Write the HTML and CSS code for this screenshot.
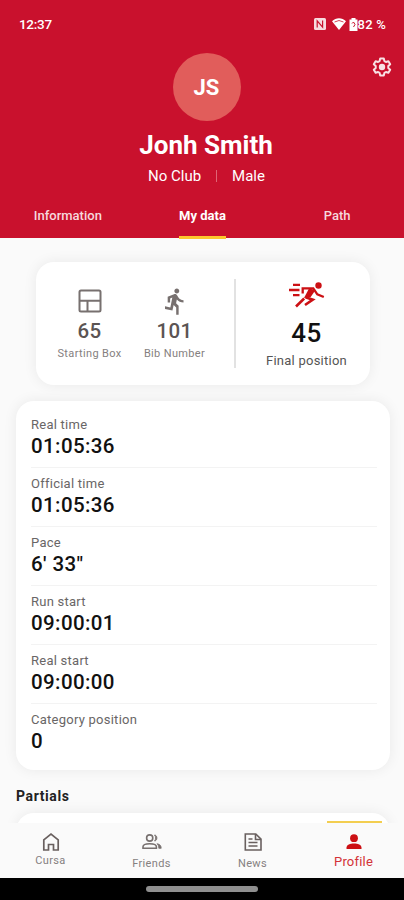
FILE: index.html
```html
<!DOCTYPE html>
<html lang="en">
<head>
    <meta charset="UTF-8">
    <meta name="viewport" content="width=device-width, initial-scale=1.0">
    <title>Profile</title>
    <link rel="stylesheet" href="styles.css">
</head>
<body>
    <header class="header">
        <div class="status-bar">
            <span class="clock">12:37</span>
            <div class="status-icons">
                <svg class="nfc" viewBox="0 0 12 12"><rect width="12" height="12" rx="1.500" fill="#fff" fill-opacity=".85"/><path d="M3.200 9.500V2.800L8.600 9.200V2.500" fill="none" stroke="#c9112d" stroke-width="1.200"/></svg>
                <svg class="wifi" viewBox="0 0 14 12"><path d="M7 12L0 3.300C4-.8 10-.8 14 3.300z" fill="#fff"/><path d="M2.500 4Q7 1 11.500 4" fill="none" stroke="#c9112d" stroke-width=".8"/></svg>
                <svg class="battery" viewBox="0 0 9 13"><path d="M2.500 0h4v1.500H8.500v11.500H.5V1.500h2z" fill="#fff"/><path d="M3 5.500l1.500-1.500L6 6.500 4.500 9" fill="none" stroke="#c9112d"/></svg>
                <span>82 %</span>
            </div>
        </div>
        <button class="settings-btn" aria-label="Settings">
            <svg viewBox="0 0 20 20" fill="none" stroke="#fff" stroke-width="2" stroke-linejoin="round"><path d="M8.200 1.500h3.600l.6 2.600 1.500.9 2.500-.8 1.800 3.100-1.900 1.800v1.800l1.900 1.800-1.800 3.100-2.500-.8-1.500.9-.6 2.600H8.200l-.6-2.600-1.500-.9-2.500.8-1.800-3.100 1.900-1.800V9.100L1.800 7.300l1.800-3.100 2.500.8 1.500-.9z"/><circle cx="10" cy="10" r="3.200" fill="#fff" stroke="none"/></svg>
        </button>
        <div class="avatar">JS</div>
        <h1 class="name">Jonh Smith</h1>
        <div class="meta">
            <span>No Club</span>
            <i class="meta-line"></i>
            <span>Male</span>
        </div>
        <nav class="tabs">
            <div class="tab"><span>Information</span></div>
            <div class="tab active"><span>My data</span></div>
            <div class="tab"><span>Path</span></div>
        </nav>
    </header>

    <main class="content">
        <section class="summary">
            <div class="stat stat-box">
                <svg class="box-icon" viewBox="0 0 24 24" fill="none" stroke="#77706f" stroke-width="2"><rect x="1.500" y="1.500" width="21" height="21" rx="1.500"/><path d="M1.500 11.700h21M9.500 12v10"/></svg>
                <strong>65</strong>
                <small>Starting Box</small>
            </div>
            <div class="stat stat-bib">
                <svg class="run-icon" viewBox="4 1 16 23" fill="#77706f"><path d="M13.490 5.480c1.100 0 2-.9 2-2s-.9-2-2-2-2 .9-2 2 .9 2 2 2zm-3.600 13.900l1-4.400 2.100 2v6h2v-7.500l-2.100-2 .6-3c1.300 1.500 3.300 2.500 5.500 2.500v-2c-1.900 0-3.500-1-4.300-2.400l-1-1.600c-.4-.6-1-1-1.700-1-.3 0-.5.1-.8.100l-5.200 2.200v4.700h2v-3.400l1.800-.7-1.600 8.100-4.900-1-.4 2 7 1.400z"/></svg>
                <strong>101</strong>
                <small>Bib Number</small>
            </div>
            <div class="stat final">
                <svg class="sprint-icon" viewBox="0 0 36 26" fill="none" stroke="#cc1014" stroke-width="2.300"><circle cx="29.500" cy="3.500" r="3.200" fill="#cc1014" stroke="none"/><path d="M4 2.800h7M0 8h10.500M4 13.200h6.500"/><path d="M13.700 11.500V6.300h10.600l4 6 6.500 2.700"/><path d="M20 6.500l6.500 1.500-5 7.300-6.500.7z" fill="#cc1014" stroke="none"/><path d="M16.500 15.300l7.300 2.400-7.800 5.300" stroke-width="2.600"/><path d="M15.200 16.500L7 24.500" stroke-width="2.600"/></svg>
                <strong>45</strong>
                <small>Final position</small>
            </div>
        </section>

        <section class="results">
            <div class="row"><label>Real time</label><b>01:05:36</b></div>
            <div class="row"><label>Official time</label><b>01:05:36</b></div>
            <div class="row"><label>Pace</label><b>6' 33"</b></div>
            <div class="row"><label>Run start</label><b>09:00:01</b></div>
            <div class="row"><label>Real start</label><b>09:00:00</b></div>
            <div class="row"><label>Category position</label><b>0</b></div>
        </section>

        <h2 class="partials-title">Partials</h2>
        <section class="partials"></section>
    </main>

    <nav class="bottom-nav">
        <div class="nav-item home">
            <svg viewBox="0 0 20 20" fill="none" stroke="#69605f" stroke-width="1.700"><path d="M2.800 18V7.800L10 2l7.200 5.800V18h-4.700v-5.500h-5V18z"/></svg>
            <span>Cursa</span>
        </div>
        <div class="nav-item friends">
            <svg viewBox="0 0 20 20" fill="none" stroke="#77706f" stroke-width="1.600"><circle cx="7.700" cy="6" r="3.100"/><path d="M1 16.300v-1.500c0-4 13.400-4 13.400 0v1.500z"/><path d="M12.500 3c3.200 0 3.200 6 0 6 1.500-1.500 1.500-4.500 0-6zM15 11.700c3 .6 4.200 1.900 4.200 4.600h-2.400c0-2-.4-3.300-1.800-4.600z" fill="#77706f" stroke-width=".8"/></svg>
            <span>Friends</span>
        </div>
        <div class="nav-item news">
            <svg viewBox="0 0 20 20" fill="none" stroke="#69605f" stroke-width="1.600"><path d="M2.300 2h10.500L18 7.200V18H2.300z"/><path d="M12.500 2v5.500H18M5.500 7h4M5.500 10.500h9M5.500 14h9"/></svg>
            <span>News</span>
        </div>
        <div class="nav-item profile">
            <svg viewBox="0 0 20 20" fill="#cc1014"><circle cx="10" cy="6.200" r="3.900"/><path d="M2.500 17v-1.500c0-5.500 15-5.500 15 0V17z"/></svg>
            <span>Profile</span>
        </div>
    </nav>
    <footer class="gesture-bar"><i></i></footer>
</body>
</html>
```

FILE: styles.css
```css
* {
    box-sizing: border-box;
}
body {
    display: flex;
    flex-direction: column;
    width: 404px;
    height: 900px;
    margin: 0;
    overflow: hidden;
    background: #fafafa;
    font-family: Roboto, "Liberation Sans", sans-serif;
}
svg {
    flex: none;
}
.header {
    position: relative;
    display: flex;
    flex-direction: column;
    align-items: center;
    flex: none;
    height: 238px;
    background: #c9112d;
    color: #fff;
}
.status-bar {
    display: flex;
    justify-content: space-between;
    align-items: center;
    flex: none;
    width: 100%;
    height: 53px;
    padding: 0 18px 5px 19px;
    font-size: 13px;
    font-weight: 500;
}
.clock {
    font-size: 13.5px;
    letter-spacing: -0.3px;
}
.status-icons {
    display: flex;
    align-items: center;
    letter-spacing: 0.2px;
}
.nfc {
    width: 12px;
    height: 12px;
    margin-right: 6px;
}
.wifi {
    width: 14px;
    height: 12px;
    margin-right: 3px;
}
.battery {
    width: 9px;
    height: 13px;
}
.settings-btn {
    position: absolute;
    top: 57px;
    right: 12px;
    width: 20px;
    height: 20px;
    padding: 0;
    border: 0;
    background: none;
    opacity: 0.88;
}
.settings-btn svg {
    display: block;
}
.avatar {
    display: flex;
    align-items: center;
    justify-content: center;
    flex: none;
    width: 68px;
    height: 68px;
    margin-left: 9px;
    border-radius: 50%;
    background: #e15d5b;
    font-size: 22px;
    font-weight: 700;
}
.name {
    margin: 8px 0 0 8px;
    font-size: 26px;
    line-height: 32px;
    font-weight: 700;
}
.meta {
    display: flex;
    align-items: center;
    margin: 5px 0 0 9px;
    font-size: 15px;
    line-height: 20px;
}
.meta-line {
    width: 1px;
    height: 12px;
    margin: 0 15px;
    background: #df6575;
}
.tabs {
    display: flex;
    flex: none;
    width: 100%;
    margin-top: 12px;
    font-size: 13px;
    font-weight: 500;
}
.tab {
    flex: 1;
    display: flex;
    justify-content: center;
    padding-left: 1px;
    color: #f7d9dd;
}
.tab span {
    height: 41px;
    padding-top: 10px;
    line-height: 16px;
}
.tab.active {
    color: #fff;
    font-weight: 700;
}
.tab.active span {
    border-bottom: 3px solid #fcc72d;
}
.content {
    flex: 1;
    min-height: 0;
    padding: 24px 14px 0 16px;
    overflow: hidden;
}
.summary {
    display: flex;
    height: 123px;
    margin: 0 20px;
    border-radius: 18px;
    background: #fff;
    box-shadow: 0 0 14px rgba(0, 0, 0, 0.07);
}
.stat {
    display: flex;
    flex-direction: column;
    align-items: center;
    color: #5b5453;
}
.stat strong {
    font-size: 20.5px;
    line-height: 24px;
    font-weight: 500;
    letter-spacing: 0.4px;
}
.stat small {
    margin-top: 4px;
    color: #858080;
    font-size: 11px;
    line-height: 14px;
    letter-spacing: 0.35px;
    white-space: nowrap;
}
.stat-box {
    width: 107px;
    padding-top: 27px;
}
.stat-bib {
    width: 63px;
    padding-top: 26px;
}
.box-icon {
    width: 24px;
    height: 24px;
    margin-bottom: 6px;
}
.run-icon {
    width: 20px;
    height: 28px;
    margin-bottom: 3px;
}
.stat.final {
    flex: 1;
    margin: 17px 0 17px 28px;
    padding: 3px 0 0 7px;
    border-left: 2px solid #e2e2e2;
    color: #111;
}
.sprint-icon {
    width: 36px;
    height: 26px;
    margin-bottom: 9px;
}
.final strong {
    font-size: 26px;
    line-height: 32px;
}
.final small {
    margin-top: 3px;
    color: #555;
    font-size: 13px;
    line-height: 18px;
    letter-spacing: 0.25px;
}
.results {
    height: 369px;
    margin-top: 16px;
    padding: 8px 13px 0 15px;
    border-radius: 18px;
    background: #fff;
    box-shadow: 0 0 14px rgba(0, 0, 0, 0.07);
}
.row {
    display: flex;
    flex-direction: column;
    height: 59px;
    padding-top: 8px;
    border-bottom: 1px solid #f3f3f3;
}
.row:last-child {
    border-bottom: 0;
}
.row label {
    color: #696666;
    font-size: 13px;
    line-height: 16px;
    letter-spacing: 0.25px;
}
.row b {
    margin-top: 1px;
    color: #111;
    font-size: 20.5px;
    line-height: 24px;
    font-weight: 500;
    letter-spacing: 0.4px;
}
.partials-title {
    margin: 16px 0 7px;
    color: #222;
    font-size: 14px;
    line-height: 20px;
    font-weight: 700;
    letter-spacing: 0.6px;
}
.partials {
    height: 80px;
    border-radius: 18px;
    background: #fff;
    box-shadow: 0 0 14px rgba(0, 0, 0, 0.07);
}
.bottom-nav {
    display: flex;
    flex: none;
    height: 55px;
    background: #fafafa;
}
.nav-item {
    position: relative;
    flex: 1;
    display: flex;
    flex-direction: column;
    align-items: center;
    padding-top: 9px;
    color: #858080;
    font-size: 11px;
    line-height: 14px;
    letter-spacing: 0.35px;
}
.nav-item svg {
    width: 20px;
    height: 20px;
}
.nav-item span {
    margin-top: 5px;
}
.nav-item.home span {
    margin-top: 2px;
}
.nav-item.profile {
    color: #d33237;
    font-size: 13px;
    letter-spacing: 0.2px;
}
.nav-item.profile span {
    margin-top: 3px;
}
.profile::before {
    content: "";
    position: absolute;
    top: -2px;
    left: 24px;
    width: 55px;
    height: 2px;
    background: #f3ce50;
}
.gesture-bar {
    display: flex;
    justify-content: center;
    flex: none;
    height: 22px;
    padding-top: 8px;
    background: #000;
}
.gesture-bar i {
    width: 112px;
    height: 6px;
    border-radius: 3px;
    background: #8f8f8f;
}
```
